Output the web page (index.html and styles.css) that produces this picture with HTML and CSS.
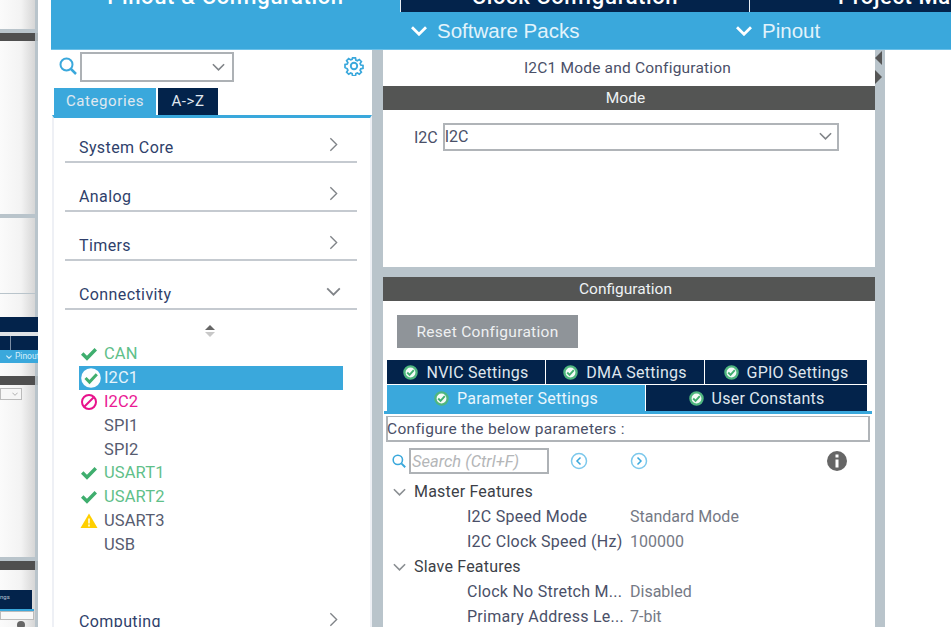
FILE: index.html
```html
<!DOCTYPE html>
<html lang="en">
<head>
  <meta charset="UTF-8" />
  <title>Pinout &amp; Configuration</title>
  <link rel="stylesheet" href="styles.css">
</head>
<body>

  <svg class="defs" width="0" height="0">
    <symbol id="chev-down" viewBox="0 0 16 10"><path d="M1 1.5 8 8.5 15 1.5" fill="none" stroke="currentColor" stroke-width="2"/></symbol>
    <symbol id="chev-bold" viewBox="0 0 16 10"><path d="M1 1.2 8 8.200 15 1.200" fill="none" stroke="currentColor" stroke-width="2.800"/></symbol>
    <symbol id="chev-right" viewBox="0 0 10 16"><path d="M1.5 1 8.500 8 1.500 15" fill="none" stroke="currentColor" stroke-width="1.500"/></symbol>
    <symbol id="check" viewBox="0 0 16 14"><path d="M1.200 6.500 6 11.300 14.800 2.300" fill="none" stroke="currentColor" stroke-width="3.500"/></symbol>
    <symbol id="check-round" viewBox="0 0 16 16"><circle cx="8" cy="8" r="6.500" fill="#f4fbf7" stroke="#4fb67f" stroke-width="2.500"/><path d="M4.500 8 7 10.500 11.500 5.500" fill="none" stroke="#3fae6e" stroke-width="2"/></symbol>
    <symbol id="check-white" viewBox="0 0 20 20"><circle cx="10" cy="10" r="9.800" fill="#fbfdfe"/><path d="M4.500 10 8.500 14 15.800 6.300" fill="none" stroke="#3fae6e" stroke-width="3"/></symbol>
    <symbol id="search" viewBox="0 0 18 18"><circle cx="7.500" cy="7.500" r="6" fill="none" stroke="currentColor" stroke-width="2"/><path d="M12 12 17 17" stroke="currentColor" stroke-width="2.500"/></symbol>
  </svg>

  <!-- window behind, mostly hidden -->
  <div class="behind">
    <div class="b-fade b-h29"></div>
    <div class="b-line b-h4"></div>
    <div class="b-bar b-h8"></div>
    <div class="b-fade b-h173"></div>
    <div class="b-line b-h4"></div>
    <div class="b-fade b-h75"></div>
    <div class="b-line b-h1"></div>
    <div class="b-fade b-h23"></div>
    <div class="b-navy b-h15"></div>
    <div class="b-pale b-h4"></div>
    <div class="b-tabs"><span></span><span></span></div>
    <div class="b-blue"><svg class="b-chev"><use href="#chev-bold"/></svg>Pinout</div>
    <div class="b-fade b-h13"></div>
    <div class="b-bar b-h9"></div>
    <div class="b-fade b-h172"><div class="b-select"><svg class="b-select-chev"><use href="#chev-down"/></svg></div></div>
    <div class="b-line b-h4"></div>
    <div class="b-bar b-h9"></div>
    <div class="b-fade b-h57">
      <div class="b-mini">ngs</div>
      <div class="b-mini-2"></div>
      <div class="b-mini-line"></div>
      <div class="b-mini-box"></div>
      <div class="b-mini-dot"></div>
    </div>
  </div>

  <div class="app">
    <header class="header">
      <div class="top-tabs">
        <div class="top-tab active"><span>Pinout &amp; Configuration</span></div>
        <div class="top-tab"><span>Clock Configuration</span></div>
        <div class="top-tab"><span>Project Manager</span></div>
      </div>
      <div class="sub-menu">
        <div class="sub-item packs"><svg class="sub-chev"><use href="#chev-bold"/></svg>Software Packs</div>
        <div class="sub-item"><svg class="sub-chev"><use href="#chev-bold"/></svg>Pinout</div>
      </div>
    </header>

    <div class="work">
      <aside class="left">
        <div class="search-row">
          <svg class="search-icon"><use href="#search"/></svg>
          <div class="combo"><svg class="combo-chev"><use href="#chev-down"/></svg></div>
          <svg class="gear" viewBox="0 0 20 20">
            <path d="M8.400 1h3.200l.5 2.500 1.600.7 2.200-1.400 2.300 2.300-1.400 2.200.7 1.600 2.500.5v3.200l-2.500.5-.7 1.600 1.400 2.200-2.300 2.300-2.200-1.400-1.600.7-.5 2.500H8.400l-.5-2.500-1.600-.7-2.200 1.400-2.300-2.300 1.400-2.200-.7-1.600L0 11.600V8.400l2.500-.5.7-1.600-1.400-2.200 2.300-2.300 2.200 1.400 1.600-.7z" transform="translate(1 1) scale(.9)" fill="none" stroke="#3aa8dc" stroke-width="1.900"/>
            <circle cx="10" cy="10" r="3.200" fill="none" stroke="#3aa8dc" stroke-width="1.900"/>
          </svg>
        </div>
        <div class="cat-tabs">
          <div class="cat-tab active">Categories</div>
          <div class="cat-tab">A-&gt;Z</div>
        </div>
        <div class="cat-list">
          <div class="cat">System Core<svg class="cat-chev"><use href="#chev-right"/></svg></div>
          <div class="cat">Analog<svg class="cat-chev"><use href="#chev-right"/></svg></div>
          <div class="cat">Timers<svg class="cat-chev"><use href="#chev-right"/></svg></div>
          <div class="cat">Connectivity<svg class="cat-chev-open"><use href="#chev-down"/></svg></div>

          <div class="sorter"><i class="sort-up"></i><i class="sort-down"></i></div>

          <ul class="periph">
            <li class="ok"><svg class="p-check"><use href="#check"/></svg>CAN</li>
            <li class="selected"><svg class="p-round"><use href="#check-white"/></svg>I2C1</li>
            <li class="bad"><svg class="p-icon" viewBox="0 0 18 18"><circle cx="9" cy="9" r="7" fill="none" stroke="#e8128c" stroke-width="2"/><path d="M4.500 13.500 13.500 4.500" stroke="#e8128c" stroke-width="2"/></svg>I2C2</li>
            <li>SPI1</li>
            <li>SPI2</li>
            <li class="ok"><svg class="p-check"><use href="#check"/></svg>USART1</li>
            <li class="ok"><svg class="p-check"><use href="#check"/></svg>USART2</li>
            <li><svg class="p-icon" viewBox="0 0 18 18"><path d="M9 1.500 17.500 16H.5z" fill="#ffcf00"/><path d="M9 6.500v5M9 12.500v2" stroke="#fff" stroke-width="1.500"/></svg>USART3</li>
            <li>USB</li>
          </ul>

          <div class="cat computing">Computing<svg class="cat-chev"><use href="#chev-right"/></svg></div>
        </div>
      </aside>

      <main class="right">
        <section class="mode">
          <div class="panel-title">I2C1 Mode and Configuration</div>
          <div class="bar">Mode</div>
          <div class="mode-row">
            <span class="mode-label">I2C</span>
            <div class="mode-select">I2C<svg class="combo-chev"><use href="#chev-down"/></svg></div>
          </div>
        </section>

        <section class="config">
          <div class="bar">Configuration</div>
          <button class="reset">Reset Configuration</button>

          <div class="tabs-row row-a">
            <div class="tab"><svg class="tab-check"><use href="#check-round"/></svg>NVIC Settings</div>
            <div class="tab"><svg class="tab-check"><use href="#check-round"/></svg>DMA Settings</div>
            <div class="tab"><svg class="tab-check"><use href="#check-round"/></svg>GPIO Settings</div>
          </div>
          <div class="tabs-row row-b">
            <div class="tab active"><svg class="tab-check"><use href="#check-round"/></svg>Parameter Settings</div>
            <div class="tab"><svg class="tab-check"><use href="#check-round"/></svg>User Constants</div>
          </div>
          <div class="tabs-line"></div>

          <div class="params-head">Configure the below parameters :</div>

          <div class="tools">
            <svg class="tools-search"><use href="#search"/></svg>
            <div class="tools-input">Search (Ctrl+F)</div>
            <svg class="nav-btn" viewBox="0 0 18 18"><circle cx="9" cy="9" r="7.500" fill="none" stroke="#7cc8ec" stroke-width="1.500"/><path d="M10.500 5.500 7 9l3.500 3.500" fill="none" stroke="#3aa8dc" stroke-width="1.500"/></svg>
            <svg class="nav-btn" viewBox="0 0 18 18"><circle cx="9" cy="9" r="7.500" fill="none" stroke="#7cc8ec" stroke-width="1.500"/><path d="M7.500 5.500 11 9l-3.500 3.500" fill="none" stroke="#3aa8dc" stroke-width="1.500"/></svg>
            <svg class="info" viewBox="0 0 20 20"><circle cx="10" cy="10" r="10" fill="#666"/><rect x="8.500" y="8.500" width="3" height="8" fill="#fff"/><rect x="8.500" y="3.500" width="3" height="3" fill="#fff"/></svg>
          </div>

          <div class="tree">
            <div class="group"><svg class="group-chev"><use href="#chev-down"/></svg>Master Features</div>
            <div class="param"><span class="p-name">I2C Speed Mode</span><span class="p-val">Standard Mode</span></div>
            <div class="param"><span class="p-name">I2C Clock Speed (Hz)</span><span class="p-val">100000</span></div>
            <div class="group"><svg class="group-chev"><use href="#chev-down"/></svg>Slave Features</div>
            <div class="param"><span class="p-name">Clock No Stretch M...</span><span class="p-val">Disabled</span></div>
            <div class="param"><span class="p-name">Primary Address Le...</span><span class="p-val">7-bit</span></div>
          </div>
        </section>
      </main>

      <div class="splitter">
        <i class="arrow-left"></i>
        <i class="arrow-right"></i>
      </div>
      <div class="blank"></div>
    </div>
  </div>

</body>
</html>
```

FILE: styles.css
```css
* { box-sizing: border-box; }

body {
  margin: 0;
  width: 951px;
  height: 627px;
  overflow: hidden;
  display: flex;
  background: white;
  font-family: Roboto, 'Liberation Sans', sans-serif;
  color: #4a5068;
}

.defs {
  position: absolute;
}

/* window behind */
.behind {
  width: 38px;
  height: 627px;
  margin-right: 13px;
  display: flex;
  flex-direction: column;
  overflow: hidden;
  flex: none;
}

.behind > div {
  flex: none;
}

.b-fade {
  background: linear-gradient(to right, #fbfbfb, #f3f3f3 60%, #d6d6d6);
  border-right: 3px solid #b9c4cb;
}

.b-line { background: #b9c4cb; }
.b-bar { background: #4f4f4f; border-right: 3px solid #aab3b8; }
.b-navy { background: #03234b; }
.b-pale { background: #dfe3e6; }

.b-h1 { height: 1px; }
.b-h4 { height: 4px; }
.b-h8 { height: 8px; }
.b-h9 { height: 9px; }
.b-h13 { height: 13px; }
.b-h15 { height: 15px; }
.b-h23 { height: 23px; }
.b-h29 { height: 29px; }
.b-h57 { height: 57px; padding-top: 20px; }
.b-h75 { height: 75px; }
.b-h172 { height: 172px; padding-top: 3px; }
.b-h173 { height: 173px; }

.b-tabs {
  height: 14px;
  display: flex;
  gap: 1px;
  background: #7d8ea5;
}

.b-tabs span {
  background: #03234b;
}

.b-tabs span:first-child { width: 10px; }
.b-tabs span:last-child { flex: 1; }

.b-blue {
  height: 13px;
  background: #3aa8dc;
  color: #d5eefa;
  font-size: 8.500px;
  line-height: 13px;
  padding-left: 6px;
  display: flex;
  align-items: center;
  white-space: nowrap;
}

.b-chev {
  width: 6px;
  height: 4px;
  margin-right: 3px;
  flex: none;
}

.b-select {
  width: 22px;
  height: 12px;
  border: 1px solid #bbb;
  background: #f6f6f6;
  display: flex;
  align-items: center;
  justify-content: flex-end;
  padding-right: 3px;
}

.b-select-chev {
  width: 6px;
  height: 4px;
  color: #999;
}

.b-mini {
  width: 32px;
  height: 13px;
  background: #03234b;
  color: #b9c6d6;
  font-size: 6px;
  line-height: 13px;
}

.b-mini-2 {
  width: 32px;
  height: 6px;
  background: #03234b;
}

.b-mini-line {
  width: 34px;
  height: 2px;
  background: #3aa8dc;
}

.b-mini-box {
  width: 34px;
  height: 9px;
  border: 1px solid #bbb;
  background: #f8f8f8;
}

.b-mini-dot {
  width: 8px;
  height: 8px;
  margin: 1px 0 0 17px;
  border-radius: 50%;
  background: #666;
}

/* main window */
.app {
  width: 900px;
  flex: none;
  display: flex;
  flex-direction: column;
}

.header {
  height: 50px;
  background: #3aa8dc;
  border-bottom: 1px solid #6cc0e8;
  overflow: hidden;
  flex: none;
}

.top-tabs {
  display: flex;
  height: 12px;
}

.top-tab {
  width: 349px;
  flex: none;
  background: #03234b;
  border-left: 1px solid #e8eef4;
  color: white;
  font-size: 22px;
  font-weight: 500;
  letter-spacing: 0.600px;
  text-align: center;
  overflow: hidden;
}

.top-tab.active {
  background: #3aa8dc;
  border-left: none;
}

.top-tab span {
  display: block;
  margin-top: -19px;
  line-height: 32px;
}

.sub-menu {
  display: flex;
  height: 38px;
  padding-left: 360px;
}

.sub-item {
  display: flex;
  align-items: center;
  color: #e2f3fb;
  font-family: 'Liberation Sans', sans-serif;
  font-size: 20.500px;
}

.sub-item.packs {
  width: 325px;
}

.sub-chev {
  width: 16px;
  height: 10px;
  margin-right: 10px;
  color: white;
}

.work {
  flex: 1;
  display: flex;
  min-height: 0;
  background: #b9c4cb;
}

.blank {
  flex: 1;
  background: white;
}

/* left panel */
.left {
  width: 321px;
  margin-right: 11px;
  background: white;
  flex: none;
}

.search-row {
  height: 38px;
  display: flex;
  align-items: flex-start;
  padding: 2px 8px 0 8px;
}

.search-icon {
  width: 18px;
  height: 18px;
  margin: 5px 3px 0 0;
  color: #3aa8dc;
  flex: none;
}

.combo {
  width: 154px;
  height: 30px;
  border: 2px solid #adb1b5;
  display: flex;
  align-items: center;
  justify-content: flex-end;
  padding-right: 7px;
}

.combo-chev {
  width: 13px;
  height: 8px;
  color: #808488;
}

.gear {
  width: 20px;
  height: 20px;
  margin: 4px 0 0 auto;
}

.cat-tabs {
  display: flex;
  height: 27px;
  gap: 2px;
  padding-left: 3px;
}

.cat-tab {
  width: 60px;
  background: #03234b;
  color: #e0e8f0;
  font-size: 15px;
  letter-spacing: 0.600px;
  text-align: center;
  line-height: 27px;
}

.cat-tab.active {
  width: 102px;
  background: #3aa8dc;
}

.cat-list {
  height: 512px;
  margin-left: 1px;
  border-top: 3px solid #3aa8dc;
  border-left: 2px solid #eef0f5;
  border-right: 2px solid #eef0f5;
  padding: 0 13px 0 11px;
}

.cat {
  height: 49px;
  border-bottom: 2px solid #c5cad0;
  display: flex;
  align-items: flex-end;
  justify-content: space-between;
  padding: 0 19px 3px 14px;
  font-size: 16px;
  line-height: 20px;
  color: #2f3f6b;
  letter-spacing: 0.400px;
}

.cat:first-child {
  height: 45px;
}

.cat.computing {
  border-bottom: none;
  margin-top: 54px;
  height: 30px;
  padding-bottom: 0;
  align-items: flex-start;
  padding-top: 2px;
}

.cat-chev {
  width: 9px;
  height: 15px;
  margin-bottom: 6px;
  color: #808488;
}

.computing .cat-chev {
  margin: 0;
}

.cat-chev-open {
  width: 15px;
  height: 9px;
  margin: 0 -3px 9px 0;
  color: #808488;
}

.sorter {
  height: 14px;
  margin-top: 15px;
  display: flex;
  flex-direction: column;
  align-items: center;
  gap: 2px;
  padding-right: 2px;
}

.sort-up {
  border: 5px solid transparent;
  border-top: none;
  border-bottom: 5px solid #666;
}

.sort-down {
  border: 5px solid transparent;
  border-bottom: none;
  border-top: 5px solid #c8c8c8;
}

.periph {
  list-style: none;
  margin: 3px 0 0 14px;
  padding: 0;
  width: 264px;
}

.periph li {
  height: 23.800px;
  display: flex;
  align-items: center;
  padding-left: 25px;
  position: relative;
  font-size: 16.500px;
  letter-spacing: 0.100px;
  color: #575c70;
}

.periph li.ok { color: #5fc08a; }
.periph li.bad { color: #ea1a94; }

.periph li.selected {
  background: #3aa8dc;
  color: #e6f4fb;
}

.p-check {
  position: absolute;
  left: 2px;
  top: 5px;
  width: 16px;
  height: 14px;
  color: #3fae6e;
}

.p-round {
  position: absolute;
  left: 2px;
  top: 2px;
  width: 20px;
  height: 20px;
}

.p-icon {
  position: absolute;
  left: 1px;
  top: 3px;
  width: 18px;
  height: 18px;
}

/* right panel */
.right {
  width: 492px;
  flex: none;
  display: flex;
  flex-direction: column;
  gap: 10px;
}

.mode {
  height: 217px;
  background: white;
  flex: none;
}

.panel-title {
  height: 36px;
  padding-right: 3px;
  text-align: center;
  line-height: 36px;
  font-size: 15.500px;
  letter-spacing: 0.200px;
}

.bar {
  height: 24px;
  background: #545554;
  color: #eef2f4;
  text-align: center;
  line-height: 24px;
  font-size: 15.500px;
  padding-right: 7px;
}

.mode-row {
  display: flex;
  align-items: center;
  padding: 13px 0 0 31px;
  gap: 5px;
  font-size: 16px;
}

.mode-select {
  width: 396px;
  height: 28px;
  border: 2px solid #b0b4b8;
  display: flex;
  align-items: center;
  justify-content: space-between;
  padding: 0 5px 2px 0;
}

.config {
  flex: 1;
  background: white;
}

.reset {
  display: block;
  width: 181px;
  height: 33px;
  margin: 14px 0 12px 14px;
  border: none;
  background: #8f9499;
  color: #eef0f2;
  font-family: Roboto, sans-serif;
  font-size: 15.500px;
  letter-spacing: 0.300px;
}

.tabs-row {
  display: flex;
  gap: 1px;
  margin: 0 8px 0 4px;
}

.row-a {
  height: 24px;
  margin-bottom: 1px;
}

.row-b {
  height: 26px;
}

.tab {
  background: #03234b;
  color: #dfe6ee;
  font-size: 16px;
  letter-spacing: 0.250px;
  display: flex;
  align-items: center;
  justify-content: center;
  white-space: nowrap;
}

.row-a .tab:nth-child(1) { width: 158px; }
.row-a .tab:nth-child(2) { width: 158px; }
.row-a .tab:nth-child(3) { flex: 1; }
.row-b .tab:nth-child(1) { width: 258px; }
.row-b .tab:nth-child(2) { flex: 1; }

.tab.active {
  background: #3aa8dc;
  color: #eaf6fc;
}

.tab-check {
  width: 15px;
  height: 15px;
  margin-right: 8px;
  flex: none;
}

.tabs-line {
  height: 3px;
  margin: 0 3px 2px 1px;
  background: #3aa8dc;
}

.params-head {
  margin: 0 5px 0 3px;
  height: 26px;
  border: 2px solid #b0b4b8;
  border-top-width: 1px;
  font-size: 15.500px;
  line-height: 25px;
  letter-spacing: 0.300px;
  text-indent: -1px;
  white-space: nowrap;
}

.tools {
  display: flex;
  align-items: center;
  height: 26px;
  margin-top: 6px;
  padding-left: 9px;
}

.tools-search {
  width: 14px;
  height: 14px;
  color: #3aa8dc;
  margin-right: 3px;
  flex: none;
}

.tools-input {
  width: 140px;
  height: 26px;
  border: 2px solid #aeb2b6;
  font-style: italic;
  font-size: 16.500px;
  color: #b4b6b8;
  padding-left: 1px;
  line-height: 23px;
  margin-right: 21px;
}

.nav-btn {
  width: 18px;
  height: 18px;
  margin-right: 42px;
}

.info {
  width: 20px;
  height: 20px;
  margin-left: 137px;
}

.tree {
  padding: 5px 0 0 10px;
}

.group {
  height: 25px;
  display: flex;
  align-items: center;
  color: #3c3f48;
  font-size: 16px;
  letter-spacing: 0.200px;
}

.group-chev {
  width: 13px;
  height: 8px;
  margin-right: 8px;
  color: #8a8e92;
}

.param {
  height: 25px;
  display: flex;
  align-items: center;
  padding-left: 74px;
  font-size: 16px;
  letter-spacing: 0.250px;
}

.p-name {
  width: 163px;
  flex: none;
  white-space: nowrap;
}

.p-val {
  color: #757985;
  letter-spacing: 0;
}

/* thin bar with collapse arrows */
.splitter {
  width: 10px;
  display: flex;
  flex-direction: column;
  gap: 5px;
  padding-top: 1px;
  flex: none;
}

.arrow-left {
  width: 7px;
  border: 7px solid transparent;
  border-left: none;
  border-right: 7px solid #555;
}

.arrow-right {
  width: 7px;
  border: 7px solid transparent;
  border-right: none;
  border-left: 7px solid #555;
}
```
